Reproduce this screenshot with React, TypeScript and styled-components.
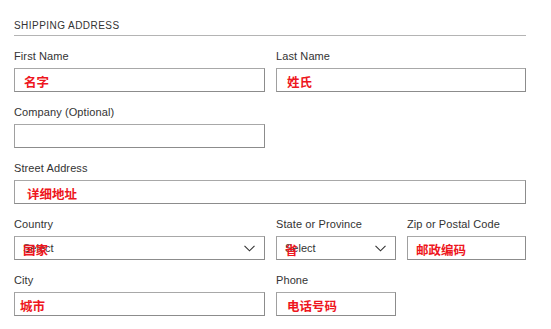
import * as React from "react";
import styled, { createGlobalStyle } from "styled-components";

const GlobalStyle = createGlobalStyle`
  body {
    margin: 0;
    background: #fff;
    font-family: "Liberation Sans", Arial, sans-serif;
  }
`;

interface IField {
  label: string;
  note?: string;
  span?: number;
  select?: boolean;
  indent?: number;
}

const rows: IField[][] = [
  [
    { label: "First Name", note: "名字", indent: 9 },
    { label: "Last Name", note: "姓氏", span: 2, indent: 10 },
  ],
  [{ label: "Company (Optional)" }],
  [{ label: "Street Address", note: "详细地址", span: 3, indent: 12 }],
  [
    { label: "Country", note: "国家", select: true, indent: 8 },
    { label: "State or Province", note: "省", select: true, indent: 8 },
    { label: "Zip or Postal Code", note: "邮政编码", indent: 8 },
  ],
  [
    { label: "City", note: "城市", indent: 5 },
    { label: "Phone", note: "电话号码", indent: 10 },
  ],
];

function Chevron() {
  return (
    <svg width="11" height="7" viewBox="0 0 11 7">
      <path d="M0.5 0.8 L5.5 5.8 L10.5 0.8" fill="none" stroke="#333" strokeWidth="1.1" />
    </svg>
  );
}

export default function App() {
  return (
    <>
      <GlobalStyle />
      <Page>
        <Heading>Shipping Address</Heading>
        <Form>
          {rows.flat().map((field, index) => (
            <Field key={index} $span={field.span || 1}>
              <Label>{field.label}</Label>
              <Box>
                {field.select && (
                  <>
                    <SelectText>Select</SelectText>
                    <Arrow>
                      <Chevron />
                    </Arrow>
                  </>
                )}
                {field.note && <Note $indent={field.indent || 8}>{field.note}</Note>}
              </Box>
            </Field>
          ))}
        </Form>
      </Page>
    </>
  );
}

const Page = styled.div`
  width: 512px;
  padding: 19px 0 0 14px;
`;

const Heading = styled.h2`
  margin: 0;
  padding-bottom: 3px;
  border-bottom: 1px solid #b4b4b4;
  font-size: 10px;
  font-weight: 400;
  letter-spacing: 0.45px;
  line-height: 13px;
  text-transform: uppercase;
  color: #333;
`;

const Form = styled.div`
  display: grid;
  grid-template-columns: 251px 120px 119px;
  column-gap: 11px;
  row-gap: 14px;
  margin-top: 14px;
`;

const Field = styled.div<{ $span: number }>`
  grid-column: span ${(p) => p.$span};
  display: flex;
  flex-direction: column;
  gap: 5px;
`;

const Label = styled.label`
  font-size: 11px;
  line-height: 13px;
  letter-spacing: 0.1px;
  color: #333;
`;

const Box = styled.div`
  position: relative;
  box-sizing: border-box;
  height: 24px;
  border: 1px solid #8c8c8c;
  border-top-color: #a8a8a8;
  border-left-color: #a0a0a0;
  background: #fff;
`;

const SelectText = styled.span`
  position: absolute;
  left: 8px;
  top: 5px;
  font-size: 11px;
  line-height: 13px;
  color: #333;
`;

const Arrow = styled.span`
  position: absolute;
  right: 9px;
  top: 8px;
  display: flex;
`;

const Note = styled.span<{ $indent: number }>`
  position: absolute;
  left: ${(p) => p.$indent}px;
  top: 5px;
  font-family: "Noto Sans CJK SC", sans-serif;
  font-size: 12.5px;
  font-weight: 700;
  line-height: 16px;
  color: #ee1620;
`;
